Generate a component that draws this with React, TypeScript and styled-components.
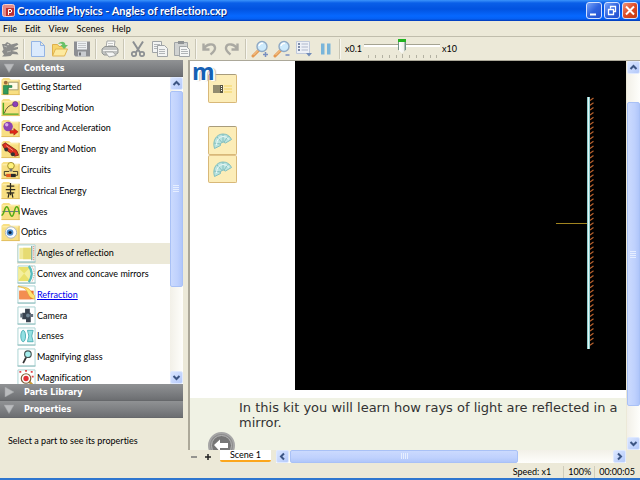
import React from "react";
import styled, { createGlobalStyle, css } from "styled-components";

const Global = createGlobalStyle`
  * { box-sizing: border-box; }
  body { margin: 0; background: #ece9d8; }
  button, input { font: inherit; color: inherit; margin: 0; }
  button { padding: 0; border: 0; background: none; }
  svg { display: block; flex: none; }
`;

const Window = styled.div`
  display: flex;
  flex-direction: column;
  height: 100vh;
  overflow: hidden;
  background: #ece9d8;
  border-bottom: 2px solid #2f76cf;
  font-family: Lato, Arial, sans-serif;
  font-size: 9px;
  font-variant-ligatures: none;
  color: #000;
`;

const TitleBar = styled.header`
  display: flex;
  align-items: center;
  flex: none;
  gap: 2px;
  height: 21px;
  padding: 0 2px;
  background: linear-gradient(#3c94fb 0, #0a5fe8 3px, #0253e0 9px, #0668ff 16px, #0560f4 19px, #0238b4 21px);
`;

const Title = styled.h1`
  flex: 1;
  margin: 0;
  font-weight: bold;
  font-size: 11px;
  line-height: 20px;
  color: #fff;
  text-shadow: 1px 1px 0 #0a2a80;
  white-space: nowrap;
`;

const Caption = styled.button<{ $close?: boolean }>`
  width: 16px;
  height: 17px;
  border: 1px solid #d4e2ff;
  border-radius: 3px;
  background: ${(p) =>
    p.$close
      ? "linear-gradient(135deg, #f0957a, #dd4a25 50%, #c43a12)"
      : "linear-gradient(135deg, #7aa4f8, #2f64e0 50%, #2450cf)"};
`;

const CaptionGroup = styled.div`
  display: flex;
  gap: 2px;
`;

const MenuBar = styled.nav`
  display: flex;
  align-items: center;
  flex: none;
  gap: 8px;
  height: 16px;
  padding-left: 3px;
  border-bottom: 1px solid #c0bdac;
`;

const MenuItem = styled.button`
  line-height: 13px;
`;

const ToolBar = styled.div`
  display: flex;
  align-items: center;
  flex: none;
  gap: 4px;
  height: 23px;
  padding-left: 1px;
`;

const Tool = styled.button`
  width: 18px;
  height: 18px;
`;

const Separator = styled.span`
  width: 2px;
  height: 20px;
  border-left: 1px solid #c9c6b5;
  border-right: 1px solid #f8f7f0;
`;

const Speed = styled.label`
  display: flex;
  align-items: center;
  gap: 2px;
`;

const SliderBox = styled.span`
  display: flex;
  flex-direction: column;
  width: 76px;
`;

const Slider = styled.input`
  appearance: none;
  width: 76px;
  height: 15px;
  background: linear-gradient(transparent 5px, #a5a391 5px, #a5a391 6px, #fff 6px, #fff 8px, transparent 8px);
  &::-webkit-slider-thumb {
    appearance: none;
    width: 8px;
    height: 15px;
    background: linear-gradient(#21b321 3px, transparent 3px),
      linear-gradient(90deg, #6f8f84 1px, #fff 1px, #f0f0ec 6px, #6f8f84 7px);
    clip-path: polygon(0 0, 100% 0, 100% 11px, 50% 100%, 0 11px);
  }
`;

const Body = styled.div`
  display: flex;
  flex: 1;
  gap: 5px;
  min-height: 0;
`;

const Sidebar = styled.aside`
  display: flex;
  flex-direction: column;
  flex: none;
  width: 183px;
`;

const SectionHead = styled.button`
  display: flex;
  align-items: center;
  flex: none;
  gap: 10px;
  height: 17px;
  padding-left: 4px;
  border-bottom: 1px solid #66686b;
  background: linear-gradient(#909294, #7b7d80 60%, #6c6e71);
  font: bold 8px/15px "DejaVu Sans", sans-serif;
  color: #fff;
`;

const ListPane = styled.div`
  display: flex;
  flex: 1;
  min-height: 0;
  overflow: hidden;
  background: #fff;
`;

const Tree = styled.ul`
  display: flex;
  flex-direction: column;
  flex: 1;
  height: 312px;
  margin: 0;
  padding: 0;
  list-style: none;
`;

const TreeItem = styled.li<{ $sub?: boolean; $on?: boolean }>`
  display: flex;
  align-items: center;
  flex: 1;
  gap: 1px;
  padding-bottom: 1px;
  margin-left: ${(p) => (p.$sub ? 17 : 1)}px;
  background: ${(p) => (p.$on ? "#ece9d8" : "none")};
`;

const TreeLink = styled.a<{ $hot?: boolean }>`
  line-height: 12px;
  color: ${(p) => (p.$hot ? "#0000ee" : "#000")};
  text-decoration: ${(p) => (p.$hot ? "underline" : "none")};
  white-space: nowrap;
`;

const PropertiesPane = styled.p`
  flex: none;
  margin: 0;
  padding: 16px 8px;
  line-height: 13px;
`;

const Bar = styled.div<{ $row?: boolean }>`
  display: flex;
  flex: none;
  gap: 1px;
  ${(p) =>
    p.$row
      ? css`
          flex: 1;
          height: 13px;
          min-width: 0;
          background: linear-gradient(#f2f0e8, #fefefb);
        `
      : css`
          flex-direction: column;
          width: 13px;
          background: linear-gradient(90deg, #f2f0e8, #fefefb);
        `}
`;

const BarButton = styled.button`
  display: grid;
  place-items: center;
  flex: none;
  width: 13px;
  height: 13px;
  border: 1px solid #dfe9ff;
  border-radius: 2px;
  background: linear-gradient(135deg, #dae6ff, #b4c9fa);
`;

const Thumb = styled.div<{ $grow: number; $row?: boolean }>`
  display: grid;
  place-items: center;
  flex: ${(p) => p.$grow} 1 0;
  border: 1px solid #a9c1f6;
  border-radius: 2px;
  background: linear-gradient(${(p) => (p.$row ? "180deg" : "90deg")}, #cbdafe, #bfd1fd 60%, #b0c6fa);
`;

const Gap = styled.div<{ $grow: number }>`
  flex: ${(p) => p.$grow} 1 0;
`;

const Main = styled.main`
  display: flex;
  flex-direction: column;
  flex: 1;
  min-width: 0;
`;

const Workspace = styled.div`
  display: flex;
  flex: 1;
  gap: 1px;
  min-height: 0;
  border-top: 1px solid #aca899;
  border-left: 2px solid #aca899;
`;

const Scene = styled.div`
  display: flex;
  flex-direction: column;
  flex: 1;
  min-width: 0;
  background: #fff;
`;

const Kit = styled.div`
  display: flex;
  flex: 1;
  min-height: 0;
  margin-bottom: 8px;
`;

const Parts = styled.div`
  display: flex;
  flex-direction: column;
  flex: none;
  width: 105px;
  padding: 13px 18px;
`;

const PartGroup = styled.div`
  position: relative;
  display: flex;
  flex-direction: column;
  margin-bottom: 23px;
`;

const Part = styled.button`
  display: grid;
  place-items: center;
  width: 29px;
  height: 29px;
  border: 1px solid #d8b878;
  border-top-color: #a89c7c;
  border-radius: 2px;
  background: #fcedb8;
  & + & {
    height: 28px;
    border-top-color: #e2c48a;
  }
`;

const Logo = styled.span`
  position: absolute;
  left: -16px;
  top: -13px;
  font: bold 23px/20px "Open Sans", sans-serif;
  color: #1560b4;
  text-shadow: 1px 0 #fff, 2px 1px #fff, 3px 1px 1px #bbb;
`;

const Stage = styled.div`
  display: flex;
  justify-content: flex-end;
  flex: 1;
  min-width: 0;
  overflow: hidden;
  background: #000;
`;

const Notes = styled.div`
  display: flex;
  flex: none;
  height: 52px;
  padding-left: 18px;
  gap: 4px;
  overflow: hidden;
  background: #f0f2e4;
`;

const BackButton = styled.button`
  flex: none;
  align-self: flex-start;
  width: 27px;
  height: 27px;
  margin-top: 34px;
`;

const NotesText = styled.p`
  margin: 0;
  padding-top: 2px;
  font: 13px/15px "DejaVu Sans", Verdana, sans-serif;
  color: #333;
  white-space: nowrap;
`;

const SceneBar = styled.div`
  display: flex;
  align-items: center;
  flex: none;
  height: 13px;
  padding: 0 14px 0 2px;
`;

const SmallButton = styled.button`
  display: grid;
  place-items: center;
  width: 14px;
  height: 13px;
  padding-right: 6px;
`;

const SceneTab = styled.button`
  align-self: flex-start;
  flex: none;
  width: 51px;
  height: 12px;
  margin: 0 5px 0 2px;
  border-bottom: 2px solid #fca61c;
  border-radius: 0 0 2px 2px;
  background: #fff;
  line-height: 10px;
`;

const StatusBar = styled.footer`
  display: flex;
  justify-content: flex-end;
  align-items: center;
  flex: none;
  height: 15px;
  padding: 3px 2px 0 0;
  font-size: 9px;
  line-height: 12px;
`;

const StatusCell = styled.span`
  padding: 0 3px 0 4px;
  border-left: 1px solid #cfccbb;
  white-space: nowrap;
  &:first-child {
    border: 0;
    padding-right: 12px;
  }
`;

function Chevron({ turn }: { turn: number }) {
  return (
    <svg width="9" height="9" viewBox="0 0 9 9">
      <path d="M1.5 6l3-3 3 3" fill="none" stroke="#3c5583" strokeWidth="2" transform={`rotate(${turn} 4.5 4.5)`} />
    </svg>
  );
}

function Grip({ row }: { row?: boolean }) {
  return (
    <svg width="7" height="7" viewBox="0 0 7 7">
      <path d="M0 .5h6M0 2.5h6M0 4.5h6M0 6.5h6" stroke="#e6eeff" transform={row ? "rotate(90 3.5 3.5)" : undefined} />
    </svg>
  );
}

function ScrollBar({ row, before = 0, size, after }: { row?: boolean; before?: number; size: number; after: number }) {
  return (
    <Bar $row={row}>
      <BarButton aria-label={row ? "Scroll left" : "Scroll up"}><Chevron turn={row ? -90 : 0} /></BarButton>
      {before > 0 && <Gap $grow={before} />}
      <Thumb $grow={size} $row={row}><Grip row={row} /></Thumb>
      <Gap $grow={after} />
      <BarButton aria-label={row ? "Scroll right" : "Scroll down"}><Chevron turn={row ? 90 : 180} /></BarButton>
    </Bar>
  );
}

const glass = (
  <>
    <path d="M8 10l-6 6" stroke="#e59a52" strokeWidth="3" strokeLinecap="round" />
    <path d="M8 9.500l-5.500 5.500" stroke="#f8cf9c" strokeWidth="1" />
    <circle cx="11" cy="6.500" r="5" fill="#cdeafc" stroke="#8fa9c4" strokeWidth="1.400" />
    <path d="M8 6a3 3 0 0 1 4-2.500" stroke="#fff" strokeWidth="1.500" fill="none" />
  </>
);

const undoPath = (
  <path d="M2.500 3.500v6h6M3 9c2-5 10-6.500 11-1.500 .6 3-2 5-4.500 7" fill="none" stroke="#aaa9a2" strokeWidth="2.400" />
);

const tools: [string, React.ReactNode][][] = [
  [["Start", <>
    <path d="M1 4l3 0 2-2 3 1.500 1 1 6-1.500 1.500 1.500-5 3 4.500-.5 0 2-6 2 5 1 1.500 2.500-6-.5-2 2-5 .5H1l2-2-2-3 1.500-2z" fill="#8b8c8a" />
    <path d="M3 6l3 1M6 12l4-1" stroke="#b9bab6" />
    <circle cx="7" cy="4.500" r=".8" fill="#e6e4da" />
  </>]],
  [
    ["New", <path d="M2.500 1.500h9l4 4v11h-13z M11.500 1.500v4h4" fill="#dbeafc" stroke="#94b4e4" />],
    ["Open", <>
      <path d="M1.500 15.500v-11h5l1.500 2h6v3" fill="#f7d56b" stroke="#dfb04b" />
      <path d="M1.500 16l3-7h12l-3 7z" fill="#fdea9f" stroke="#e0b452" />
      <path d="M7 4c3-3.500 7-2.500 7.500 1h2.500l-4 4-3.500-4h2c-.5-1.500-2-2-4.500-1z" fill="#68c168" />
    </>],
    ["Save", <>
      <path d="M1 1.500h16v15H2.500L1 15z" fill="#8d8f93" />
      <path d="M4 1.500h10v8H4z" fill="#edf0f2" />
      <path d="M5 3.500h8M5 5.500h8M5 7.500h8" stroke="#c2c5c8" />
      <path d="M5 11.500h8v5H5z" fill="#c9ccd0" />
      <path d="M6 12.500h2v3H6z" fill="#707276" />
    </>],
  ],
  [["Print", <>
    <path d="M5 8l1-7h8l-1 7z" fill="#fafaf8" stroke="#a5a7a6" />
    <path d="M7 3.500h5M7 5.500h5" stroke="#c6c8c7" />
    <path d="M1 9l3-2.500h11l2 2.500v4l-3 2H3l-2-2z" fill="#c1c3c2" stroke="#929593" />
    <path d="M2 10.500h14" stroke="#f5f5f3" />
    <path d="M4 12h8l3 3.500-7 1.500z" fill="#f4f5f4" stroke="#a5a7a6" />
  </>]],
  [
    ["Cut", <>
      <path d="M4 1.500l7 11M14 1.500l-7 11" stroke="#8b8f92" strokeWidth="2" />
      <circle cx="5" cy="14" r="2.200" fill="none" stroke="#8b8f92" strokeWidth="1.700" />
      <circle cx="13" cy="14" r="2.200" fill="none" stroke="#8b8f92" strokeWidth="1.700" />
    </>],
    ["Copy", <>
      <path d="M1.500 1.500h9v11h-9z" fill="#f3f4f3" stroke="#a0a4a6" />
      <path d="M3 4.500h6M3 6.500h6M3 8.500h4" stroke="#b1b5b8" />
      <path d="M6.500 5.500h7l3 3v8h-10z" fill="#f3f4f3" stroke="#a0a4a6" />
      <path d="M8 9.500h6M8 11.500h6M8 13.500h6" stroke="#b1b5b8" />
    </>],
    ["Paste", <>
      <path d="M1.500 2.500h13v13h-13z" fill="#d0d2d1" stroke="#a0a4a6" />
      <path d="M5 1h6v3H5z" fill="#8f9395" />
      <path d="M6.500 6.500h7l3 3v7h-10z" fill="#f5f6f5" stroke="#a0a4a6" />
      <path d="M8 9.500h6M8 11.500h7M8 13.500h7" stroke="#b1b5b8" />
    </>],
  ],
  [
    ["Undo", undoPath],
    ["Redo", <g transform="matrix(-1 0 0 1 17 0)">{undoPath}</g>],
  ],
  [
    ["Zoom in", <>{glass}<path d="M14.500 12v5M12 14.500h5" stroke="#788fc0" strokeWidth="1.500" /></>],
    ["Zoom out", <>{glass}<path d="M12.500 15h4" stroke="#788fc0" strokeWidth="1.500" /></>],
    ["Options", <>
      <path d="M1.500 1.500h13v12h-13z" fill="#eef1f7" stroke="#c0c9da" />
      <path d="M3 4h2M3 7h2M3 10h2" stroke="#7c8ba8" strokeWidth="2" />
      <path d="M6.500 4h6.500M6.500 7h6.500M6.500 10h6.500" stroke="#adb8cc" strokeWidth="1.200" />
      <path d="M11 13h6l-3 3.500z" fill="#708bb8" />
    </>],
    ["Pause", <path d="M4 3.500h3.500v11H4zM10 3.500h3.500v11H10z" fill="#79b5da" />],
  ],
];

const topIcons: Record<string, React.ReactNode> = {
  start: <>
    <path d="M7.500 5.500h10v8h-10z" fill="#fffbe4" stroke="#a29b6e" />
    <circle cx="4.500" cy="6" r="2" fill="#9d6b3c" />
    <path d="M2 9h9v2H7v7H2z" fill="#2f9b5d" stroke="#1c6c3d" strokeWidth=".6" />
  </>,
  motion: <>
    <path d="M2 5v12h16" fill="none" stroke="#4ea822" strokeWidth="1.500" />
    <path d="M3 16q3-9 10-9" fill="none" stroke="#5b5430" />
    <circle cx="14.500" cy="6.500" r="2.800" fill="#8d3fb8" stroke="#5b2380" strokeWidth=".6" />
  </>,
  force: <>
    <circle cx="7" cy="8" r="5" fill="#8d44b3" />
    <circle cx="5.500" cy="6" r="1.800" fill="#d8ace8" />
    <path d="M9 12h4v-2l4.500 3.500-4.500 3.500v-2H9z" fill="#e02717" stroke="#911" strokeWidth=".5" />
  </>,
  energy: <>
    <path d="M1 5l3-2 12 8 2 5-4 1L3 9z" fill="#dd3020" stroke="#6e160e" strokeWidth=".8" />
    <path d="M5 6l7 5" stroke="#ff9a84" />
    <circle cx="5" cy="10" r="2" fill="#333" /><circle cx="12" cy="15" r="2.200" fill="#333" />
  </>,
  circuits: <>
    <circle cx="10" cy="5" r="3.500" fill="#fff27a" stroke="#a18c29" />
    <path d="M8.500 8h3v3h-3z" fill="#777" />
    <path d="M8 11H3v4h14v-4h-5" fill="none" stroke="#393424" />
    <path d="M5 13.500h5v3.500H5z" fill="#e35c23" /><path d="M10 13.500h5v3.500h-5z" fill="#292929" />
  </>,
  electrical: <path d="M9.500 2v13M5.500 5.500h8M4.500 9h10M5.500 12.500h8M8 12.500l-1 5M11 12.500l1 5" fill="none" stroke="#302c20" strokeWidth="1.300" />,
  waves: <>
    <path d="M1 10h18" stroke="#64748c" />
    <path d="M0 14c3 0 3-9 5.500-9s3 10 5.500 10 2.500-10 5-10 2 5 3 8" fill="none" stroke="#55ab16" strokeWidth="1.600" />
  </>,
  optics: <>
    <circle cx="10" cy="10" r="6" fill="#fbfcff" stroke="#adb5bd" />
    <circle cx="9" cy="10" r="3.500" fill="#4a8dd0" /><circle cx="9" cy="10" r="1.700" fill="#0c1b38" />
  </>,
};

const subIcons: Record<string, React.ReactNode> = {
  angles: <>
    <path d="M2 4h12v12H2z" fill="#f0e998" /><path d="M6 4h8v12H6z" fill="#e6db72" />
    <path d="M15 2v15" stroke="#85b4a4" strokeWidth="1.500" />
    <path d="M17 2v15" stroke="#d98570" strokeWidth="1.500" strokeDasharray="1 1" />
  </>,
  mirrors: <>
    <path d="M1 2h12v15H1z" fill="#e9e16b" /><path d="M1 3l6 6-6 7M13 3L7 9l6 7" fill="#f4ef9e" />
    <path d="M12 1q6 8 0 17" fill="none" stroke="#57bcbc" strokeWidth="2.500" />
    <path d="M15 1q5 8 0 17" fill="none" stroke="#cf8b70" strokeDasharray="1 1" />
  </>,
  refraction: <>
    <path d="M2 6h15v9H2z" fill="#ee6f2e" /><path d="M2 6h8l4 9H2z" fill="#f38d51" />
    <path d="M1 2c7 1 8 2 10 7s5 5 7 6V11c-3-1-4-7-8-8S4 2 1 1z" fill="#ffe173" stroke="#dbaa32" strokeWidth=".6" />
  </>,
  camera: <>
    <path d="M5 7h9v7H5zM8 3h5v4H8zM9 14h5v3H9z" fill="#394350" />
    <path d="M3 8h2v4H3zM14 8.500h2.500v3H14z" fill="#62707d" /><circle cx="11" cy="10" r="2" fill="#6f8494" />
  </>,
  lenses: <>
    <ellipse cx="6" cy="9.500" rx="2.500" ry="6" fill="#92e0e2" stroke="#4fb0b5" />
    <path d="M10.500 3.500h6q-3 6 0 12h-6q3-6 0-12z" fill="#92e0e2" stroke="#4fb0b5" />
  </>,
  magnifying: <>
    <path d="M9 10l-3 6" stroke="#333" strokeWidth="1.800" /><circle cx="11" cy="6.500" r="3.500" fill="#a6eeee" stroke="#465454" strokeWidth="1.200" />
  </>,
  magnification: <>
    <path d="M12 13l4 4" stroke="#c99b35" strokeWidth="2.500" />
    <circle cx="9" cy="10" r="5" fill="#fff" stroke="#81623c" strokeWidth="1.300" /><circle cx="9" cy="10" r="2.800" fill="#e12e34" />
    <path d="M2 3h2M8 2h2M14 3h2M15 8h2" stroke="#e0444a" strokeWidth="2" />
  </>,
};

const tree: { icon: string; text: string; sub?: boolean; on?: boolean; hot?: boolean }[] = [
  { icon: "start", text: "Getting Started" },
  { icon: "motion", text: "Describing Motion" },
  { icon: "force", text: "Force and Acceleration" },
  { icon: "energy", text: "Energy and Motion" },
  { icon: "circuits", text: "Circuits" },
  { icon: "electrical", text: "Electrical Energy" },
  { icon: "waves", text: "Waves" },
  { icon: "optics", text: "Optics" },
  { icon: "angles", text: "Angles of reflection", sub: true, on: true },
  { icon: "mirrors", text: "Convex and concave mirrors", sub: true },
  { icon: "refraction", text: "Refraction", sub: true, hot: true },
  { icon: "camera", text: "Camera", sub: true },
  { icon: "lenses", text: "Lenses", sub: true },
  { icon: "magnifying", text: "Magnifying glass", sub: true },
  { icon: "magnification", text: "Magnification", sub: true },
];

function ItemIcon({ name, sub }: { name: string; sub?: boolean }) {
  return (
    <svg width="19" height="19" viewBox="0 0 19 20">
      {sub ? (
        <>
          <path d="M.5 1h18v18H.5z" fill="#fff" stroke="#a9d3d3" />
          <path d="M0 19h19" stroke="#8fbcbc" />
          {subIcons[name]}
        </>
      ) : (
        <>
          <path d="M0 3l2-2h6l2 2h9v16H0z" fill="#f8df83" />
          <path d="M0 18.500h19M18.500 3v16" stroke="#dfbd5e" />
          <path d="M1 4h17" stroke="#fff3b8" />
          {topIcons[name]}
        </>
      )}
    </svg>
  );
}

function Triangle({ open }: { open?: boolean }) {
  return (
    <svg width="10" height="10" viewBox="0 0 10 10">
      <path d={open ? "M0 1h10L5 9.500z" : "M1 0l9 5-9 5z"} fill="#b9bbbd" stroke="#a0a2a4" strokeWidth=".5" />
    </svg>
  );
}

function Protractor() {
  return (
    <svg width="21" height="20" viewBox="0 0 21 20">
      <path d="M2.500 17.500C0 9 5 3 11 3c4 0 7 2 8.500 5.500l-6 3.500q-2.500-2-4.500 0-1 1-.5 2.500z" fill="#b9e3df" stroke="#83bfbe" />
      <path d="M2 12l6.500 1M5 6l5 5.500M11 3v8M16.500 5l-4.500 6" stroke="#83bfbe" fill="none" />
      <path d="M4.500 14Q5 6 11 5.500q4 0 6 3" stroke="#effaf8" fill="none" />
    </svg>
  );
}

const hatchCount = 52;

export default function App() {
  return (
    <Window>
      <Global />
      <TitleBar>
        <svg width="13" height="13" viewBox="0 0 13 13">
          <rect x=".5" y=".5" width="12" height="12" rx="2" fill="#e48b88" stroke="#f6cfcd" />
          <path d="M4 12V4h8v7.500z" fill="#bc2f32" />
          <path d="M6.500 11V5.500h2.500q1.500 1.500 0 3H7" stroke="#fff" fill="none" />
        </svg>
        <Title>Crocodile Physics - Angles of reflection.cxp</Title>
        <CaptionGroup>
          <Caption aria-label="Minimize">
            <svg width="14" height="15" viewBox="0 0 14 15"><path d="M3 11.500h6" stroke="#fff" strokeWidth="2" /></svg>
          </Caption>
          <Caption aria-label="Restore">
            <svg width="14" height="15" viewBox="0 0 14 15">
              <path d="M5.500 5.500V3.500h5v5h-2M3.500 6.500h5v5h-5z" fill="none" stroke="#fff" strokeWidth="1.300" />
            </svg>
          </Caption>
          <Caption $close aria-label="Close">
            <svg width="14" height="15" viewBox="0 0 14 15"><path d="M3 3.500l8 8M11 3.500l-8 8" stroke="#fff" strokeWidth="2" /></svg>
          </Caption>
        </CaptionGroup>
      </TitleBar>
      <MenuBar>
        {["File", "Edit", "View", "Scenes", "Help"].map((m) => <MenuItem key={m}>{m}</MenuItem>)}
      </MenuBar>
      <ToolBar>
        {tools.map((group, i) => (
          <React.Fragment key={i}>
            {group.map(([name, art]) => (
              <Tool key={name} aria-label={name}>
                <svg width="18" height="18" viewBox="0 0 18 18">{art}</svg>
              </Tool>
            ))}
            <Separator />
          </React.Fragment>
        ))}
        <Speed>
          x0.1
          <SliderBox>
            <Slider type="range" min="0" max="8" defaultValue="4" aria-label="Speed" />
            <svg width="76" height="5" viewBox="0 0 76 5">
              <path d="M4.500 1v3M11.500 1v3M18.500 1v3M25.500 1v3M32.500 1v3M38.500 0v4M45.500 1v3M52.500 1v3M59.500 1v3M66.500 1v3M72.500 1v3" stroke="#b3b1a2" />
            </svg>
          </SliderBox>
          x10
        </Speed>
      </ToolBar>
      <Body>
        <Sidebar>
          <SectionHead><Triangle open />Contents</SectionHead>
          <ListPane>
            <Tree>
              {tree.map((t) => (
                <TreeItem key={t.text} $sub={t.sub} $on={t.on}>
                  <ItemIcon name={t.icon} sub={t.sub} />
                  <TreeLink href="#" $hot={t.hot}>{t.text}</TreeLink>
                </TreeItem>
              ))}
            </Tree>
            <ScrollBar size={197} after={84} />
          </ListPane>
          <SectionHead><Triangle />Parts Library</SectionHead>
          <SectionHead><Triangle open />Properties</SectionHead>
          <PropertiesPane>Select a part to see its properties</PropertiesPane>
        </Sidebar>
        <Main>
          <Workspace>
            <Scene>
              <Kit>
                <Parts>
                  <PartGroup>
                    <Part aria-label="Ray box">
                      <svg width="21" height="12" viewBox="0 0 21 12">
                        <path d="M1 2h9v8H1z" fill="#928c70" /><path d="M8 2h3v8H8z" fill="#595643" />
                        <path d="M9.500 3v6" stroke="#fff" strokeDasharray="1 1" />
                        <path d="M12 3h8M12 6h8M12 9h8" stroke="#f3d35e" />
                      </svg>
                    </Part>
                    <Logo>m</Logo>
                  </PartGroup>
                  <PartGroup>
                    <Part aria-label="Protractor"><Protractor /></Part>
                    <Part aria-label="Protractor"><Protractor /></Part>
                  </PartGroup>
                </Parts>
                <Stage>
                  <svg width="331" height="329" viewBox="0 0 331 329">
                    <path d="M261 162.500h31" stroke="#a08420" />
                    {Array.from({ length: hatchCount }, (_, i) => (
                      <path key={i} d={`M295 ${39.5 + i * 4.8}l3.500-2.500`} stroke="#b8602c" strokeWidth="1.200" />
                    ))}
                    <path d="M293.500 36v252" stroke="#8ccaca" strokeWidth="3" />
                    <path d="M293.500 36v252" stroke="#e4f6f4" />
                  </svg>
                </Stage>
              </Kit>
              <Notes>
                <BackButton aria-label="Back">
                  <svg width="27" height="27" viewBox="0 0 27 27">
                    <circle cx="13.500" cy="13.500" r="12.500" fill="#8c8c8c" stroke="#a6a6a6" strokeWidth="2" />
                    <circle cx="13.500" cy="13.500" r="10" fill="#777" stroke="#b4b4b4" />
                    <path d="M6 13l6-5.500v3.500h8v5h-8v3.500z" fill="#fff" />
                  </svg>
                </BackButton>
                <NotesText>
                  In this kit you will learn how rays of light are reflected in a<br />mirror.
                </NotesText>
              </Notes>
            </Scene>
            <ScrollBar before={26} size={308} after={29} />
          </Workspace>
          <SceneBar>
            <SmallButton aria-label="Remove scene">
              <svg width="8" height="8" viewBox="0 0 8 8"><path d="M1 4h6" stroke="#777" strokeWidth="1.500" /></svg>
            </SmallButton>
            <SmallButton aria-label="Add scene">
              <svg width="8" height="8" viewBox="0 0 8 8"><path d="M1 4h6M4 1v6" stroke="#222" strokeWidth="1.500" /></svg>
            </SmallButton>
            <SceneTab>Scene 1</SceneTab>
            <ScrollBar row size={229} after={94} />
          </SceneBar>
        </Main>
      </Body>
      <StatusBar>
        <StatusCell>Speed: x1</StatusCell>
        <StatusCell>100%</StatusCell>
        <StatusCell>00:00:05</StatusCell>
      </StatusBar>
    </Window>
  );
}
